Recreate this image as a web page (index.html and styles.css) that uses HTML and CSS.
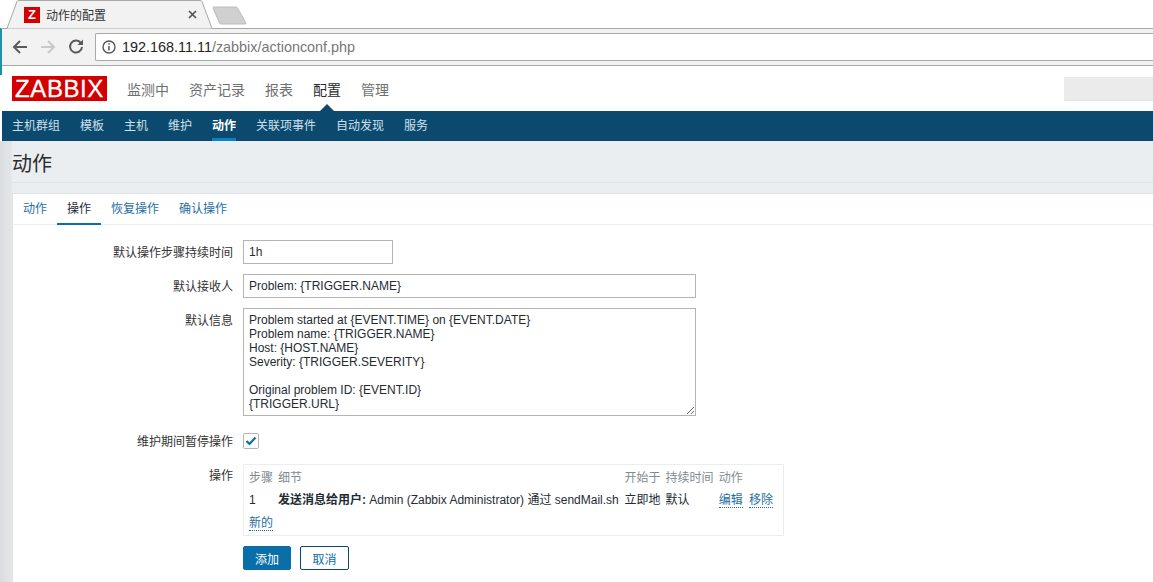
FILE: index.html
```html
<!DOCTYPE html>
<html lang="zh-CN">
<head>
  <meta charset="UTF-8" />
  <title>动作的配置</title>
  <link rel="stylesheet" href="styles.css">
</head>
<body>

  <div class="window-edge"></div>

  <!-- Browser tabs -->
  <div class="tabstrip">
    <div class="tab">
      <svg class="tab-shape" width="212" height="29" viewBox="0 0 212 29">
        <path d="M0 28.5 H6 L16 1.5 Q16.500 .5 18 .5 H199 Q200.500 .5 201 1.500 L211 28.5" fill="#f2f2f2" stroke="#a8a8a8"/>
      </svg>
      <span class="favicon">Z</span>
      <span class="tab-title">动作的配置</span>
      <svg class="tab-close" width="9" height="9" viewBox="0 0 9 9"><path d="M1 1 L8 8 M8 1 L1 8" stroke="#555" stroke-width="1.700"/></svg>
    </div>
    <svg class="newtab" width="36" height="20" viewBox="0 0 36 20">
      <path d="M1 2 Q.5 1 2 1 H24 Q25 1 25.500 2 L34 17 Q34.500 18 33 18 H9 Q8 18 7.500 17 Z" fill="#d0d0d0" stroke="#bdbdbd"/>
    </svg>
  </div>

  <!-- Browser toolbar -->
  <div class="toolbar">
    <svg class="nav-icon" width="16" height="16" viewBox="0 0 16 16"><path d="M15 8 H2 M8 2 L2 8 L8 14" fill="none" stroke="#5a5a5a" stroke-width="2"/></svg>
    <svg class="nav-icon" width="16" height="16" viewBox="0 0 16 16"><path d="M1 8 H14 M8 2 L14 8 L8 14" fill="none" stroke="#c9c9c9" stroke-width="2"/></svg>
    <svg class="nav-icon" width="16" height="16" viewBox="0 0 16 16"><path d="M13.200 4.500 A6 6 0 1 0 14 8" fill="none" stroke="#5a5a5a" stroke-width="2"/><path d="M9.500 6 H15 V.5 Z" fill="#5a5a5a"/></svg>
    <div class="omnibox">
      <svg width="14" height="14" viewBox="0 0 14 14"><circle cx="7" cy="7" r="6" fill="none" stroke="#555" stroke-width="1.400"/><path d="M7 6 V10.500 M7 3.200 V4.800" stroke="#555" stroke-width="1.500"/></svg>
      <span class="url-host">192.168.11.11</span><span class="url-path">/zabbix/actionconf.php</span>
    </div>
  </div>

  <!-- Zabbix top menu -->
  <header class="topnav">
    <div class="logo">ZABBIX</div>
    <nav class="mainmenu">
      <a href="#">监测中</a>
      <a href="#">资产记录</a>
      <a href="#">报表</a>
      <a href="#" class="selected">配置</a>
      <a href="#">管理</a>
    </nav>
    <div class="searchbox"></div>
  </header>

  <nav class="submenu">
    <a href="#">主机群组</a>
    <a href="#">模板</a>
    <a href="#">主机</a>
    <a href="#">维护</a>
    <a href="#" class="selected">动作</a>
    <a href="#">关联项事件</a>
    <a href="#">自动发现</a>
    <a href="#">服务</a>
  </nav>

  <main class="content">
    <h1 class="page-title">动作</h1>

    <div class="card">
      <div class="tabs">
        <a href="#">动作</a>
        <a href="#" class="selected">操作</a>
        <a href="#">恢复操作</a>
        <a href="#">确认操作</a>
      </div>

      <form class="form">
        <div class="row">
          <label>默认操作步骤持续时间</label>
          <input class="input input-short" type="text" value="1h">
        </div>
        <div class="row">
          <label>默认接收人</label>
          <input class="input input-long" type="text" value="Problem: {TRIGGER.NAME}">
        </div>
        <div class="row">
          <label>默认信息</label>
          <textarea class="input input-long message">Problem started at {EVENT.TIME} on {EVENT.DATE}
Problem name: {TRIGGER.NAME}
Host: {HOST.NAME}
Severity: {TRIGGER.SEVERITY}

Original problem ID: {EVENT.ID}
{TRIGGER.URL}</textarea>
        </div>
        <div class="row row-check">
          <label>维护期间暂停操作</label>
          <span class="checkbox">
            <svg width="12" height="10" viewBox="0 0 12 10"><path d="M1.500 5 L4.500 8 L10.500 1.500" fill="none" stroke="#0a6ea8" stroke-width="2.200"/></svg>
          </span>
        </div>
        <div class="row row-ops">
          <label>操作</label>
          <div class="ops">
            <table class="ops-table">
              <tr class="ops-head">
                <td class="col-step">步骤</td>
                <td class="col-detail">细节</td>
                <td class="col-start">开始于</td>
                <td class="col-dur">持续时间</td>
                <td>动作</td>
              </tr>
              <tr>
                <td>1</td>
                <td><b>发送消息给用户:</b> Admin (Zabbix Administrator) 通过 sendMail.sh</td>
                <td>立即地</td>
                <td>默认</td>
                <td><a href="#" class="dotted">编辑</a> <a href="#" class="dotted remove">移除</a></td>
              </tr>
            </table>
            <a href="#" class="dotted new-op">新的</a>
          </div>
        </div>
        <div class="buttons">
          <button type="button" class="btn btn-main">添加</button>
          <button type="button" class="btn btn-alt">取消</button>
        </div>
      </form>
    </div>
  </main>
</body>
</html>
```

FILE: styles.css
```css
* {
  box-sizing: border-box;
}

html, body {
  height: 582px;
  overflow: hidden;
}

body {
  margin: 0;
  font-family: "Liberation Sans", "Noto Sans CJK SC", sans-serif;
  font-size: 12px;
  color: #1f2c33;
  background: #fff;
}

a {
  text-decoration: none;
}

.window-edge {
  position: absolute;
  left: 0;
  top: 28px;
  width: 2px;
  height: 47px;
  background: #1a93a8;
}

/* Browser chrome */
.tabstrip {
  display: flex;
  height: 29px;
  padding-left: 1px;
  border-bottom: 1px solid #a8a8a8;
}

.tab {
  position: relative;
  width: 212px;
  height: 29px;
  display: flex;
  align-items: center;
  padding-left: 23px;
}

.tab-shape {
  position: absolute;
  left: 0;
  top: 0;
}

.favicon {
  position: relative;
  width: 16px;
  height: 16px;
  background: #d40000;
  color: #fff;
  font-weight: bold;
  font-size: 13px;
  line-height: 16px;
  text-align: center;
}

.tab-title {
  position: relative;
  margin-left: 6px;
  width: 142px;
  color: #333;
}

.tab-close {
  position: relative;
}

.newtab {
  margin: 6px 0 0 -1px;
}

.toolbar {
  display: flex;
  align-items: center;
  height: 37px;
  padding: 0 0 0 12px;
  background: #f2f2f2;
  border-bottom: 1px solid #a8a8a8;
}

.nav-icon {
  margin-right: 12px;
}

.omnibox {
  flex: 1;
  display: flex;
  align-items: center;
  height: 28px;
  margin-left: -1px;
  padding-left: 6px;
  background: #fff;
  border: 1px solid #a9a9a9;
  border-right: 0;
  border-radius: 2px 0 0 2px;
  font-size: 14.400px;
}

.omnibox svg {
  margin-right: 6px;
}

.url-host {
  color: #222;
}

.url-path {
  color: #777;
}

/* Zabbix header */
.topnav {
  display: flex;
  align-items: center;
  height: 45px;
  padding-left: 12px;
}

.logo {
  width: 95px;
  height: 25px;
  background: #d40000;
  color: #fff;
  font-size: 24px;
  line-height: 25px;
  text-align: center;
  letter-spacing: .6px;
  -webkit-text-stroke: .3px #fff;
}

.mainmenu {
  display: flex;
  gap: 20px;
  margin-left: 20px;
  font-size: 14px;
}

.mainmenu a {
  color: #6f6f6f;
}

.mainmenu a.selected {
  position: relative;
  color: #2b2b2b;
}

.mainmenu a.selected::after {
  content: "";
  position: absolute;
  left: 7px;
  top: 25px;
  border: 7px solid transparent;
  border-top: 0;
  border-bottom-color: #0b4a6e;
}

.searchbox {
  width: 89px;
  height: 24px;
  margin-left: auto;
  background: #ebebeb;
  border-bottom: 1px solid #e4e6e8;
}

.submenu {
  display: flex;
  gap: 20px;
  height: 30px;
  margin-left: 2px;
  padding-left: 10px;
  background: #0b4a6e;
}

.submenu a {
  height: 30px;
  line-height: 30px;
  color: #cfe0ea;
}

.submenu a.selected {
  color: #fff;
  font-weight: bold;
  border-bottom: 3px solid #0a81c4;
}

/* Page */
.content {
  height: 441px;
  padding-left: 12px;
  background: linear-gradient(90deg, #d9dde0, #e4e7e9 12px, #ebeef0 12px);
}

.page-title {
  height: 42px;
  margin: 0;
  font-size: 20px;
  font-weight: normal;
  line-height: 47px;
  color: #2b2b2b;
  border-bottom: 1px solid #dfe3e6;
}

.card {
  height: 400px;
  margin-top: 10px;
  background: #fff;
  border: 1px solid #dfe4e7;
  border-right: 0;
}

.tabs {
  display: flex;
  height: 31px;
  border-bottom: 1px solid #ebeef0;
}

.tabs a {
  padding: 5px 10px 0;
  color: #1f6f9f;
}

.tabs a.selected {
  color: #1f2c33;
  border-bottom: 2px solid #0a6ea8;
  height: 31px;
}

.form {
  padding-top: 15px;
}

.row {
  display: flex;
  align-items: flex-start;
  margin-bottom: 10px;
}

.row label {
  width: 220px;
  padding-top: 3px;
  margin-right: 10px;
  text-align: right;
  color: #333;
}

.input {
  height: 24px;
  padding: 0 5px;
  border: 1px solid #b4b4b4;
  background: #fff;
  font-family: inherit;
  font-size: 12px;
  color: #1f2c33;
}

.input-short {
  width: 150px;
}

.input-long {
  width: 453px;
}

.message {
  height: 108px;
  padding: 4px 5px 2px;
  line-height: 14px;
  resize: both;
  overflow: hidden;
}

.row-check {
  align-items: center;
  margin-top: 16px;
}

.row-check label {
  padding-top: 0;
}

.checkbox {
  display: flex;
  align-items: center;
  justify-content: center;
  width: 16px;
  height: 16px;
  border: 1px solid #b4b4b4;
  border-radius: 2px;
}

.row-ops {
  margin-top: 15px;
}

.row-ops label {
  padding-top: 2px;
}

.ops {
  width: 541px;
  height: 72px;
  padding: 0 5px;
  border: 1px solid #ebeef0;
}

.ops-table {
  border-collapse: collapse;
  white-space: nowrap;
}

.ops-table td {
  padding: 0 5px 0 0;
  height: 20px;
  vertical-align: baseline;
}

.ops-head td {
  height: 25px;
  padding-top: 3px;
  color: #7f8b92;
}

.col-step { width: 29px; }
.col-detail { width: 347px; }
.col-start { width: 41px; }
.col-dur { width: 53px; }

.dotted {
  color: #1f6f9f;
  border-bottom: 1px dotted #1f6f9f;
}

.remove {
  margin-left: 3px;
}

.new-op {
  display: inline-block;
  margin-top: 3px;
}

.buttons {
  display: flex;
  gap: 9px;
  margin: 10px 0 0 230px;
}

.btn {
  width: 48px;
  height: 24px;
  padding: 0;
  border-radius: 2px;
  font-family: inherit;
  font-size: 12px;
}

.btn-main {
  background: #0a6ea8;
  border: 1px solid #0a6ea8;
  color: #fff;
}

.btn-alt {
  width: 49px;
  background: #fff;
  border: 1px solid #0b4a6e;
  color: #0a6ea8;
}
```
